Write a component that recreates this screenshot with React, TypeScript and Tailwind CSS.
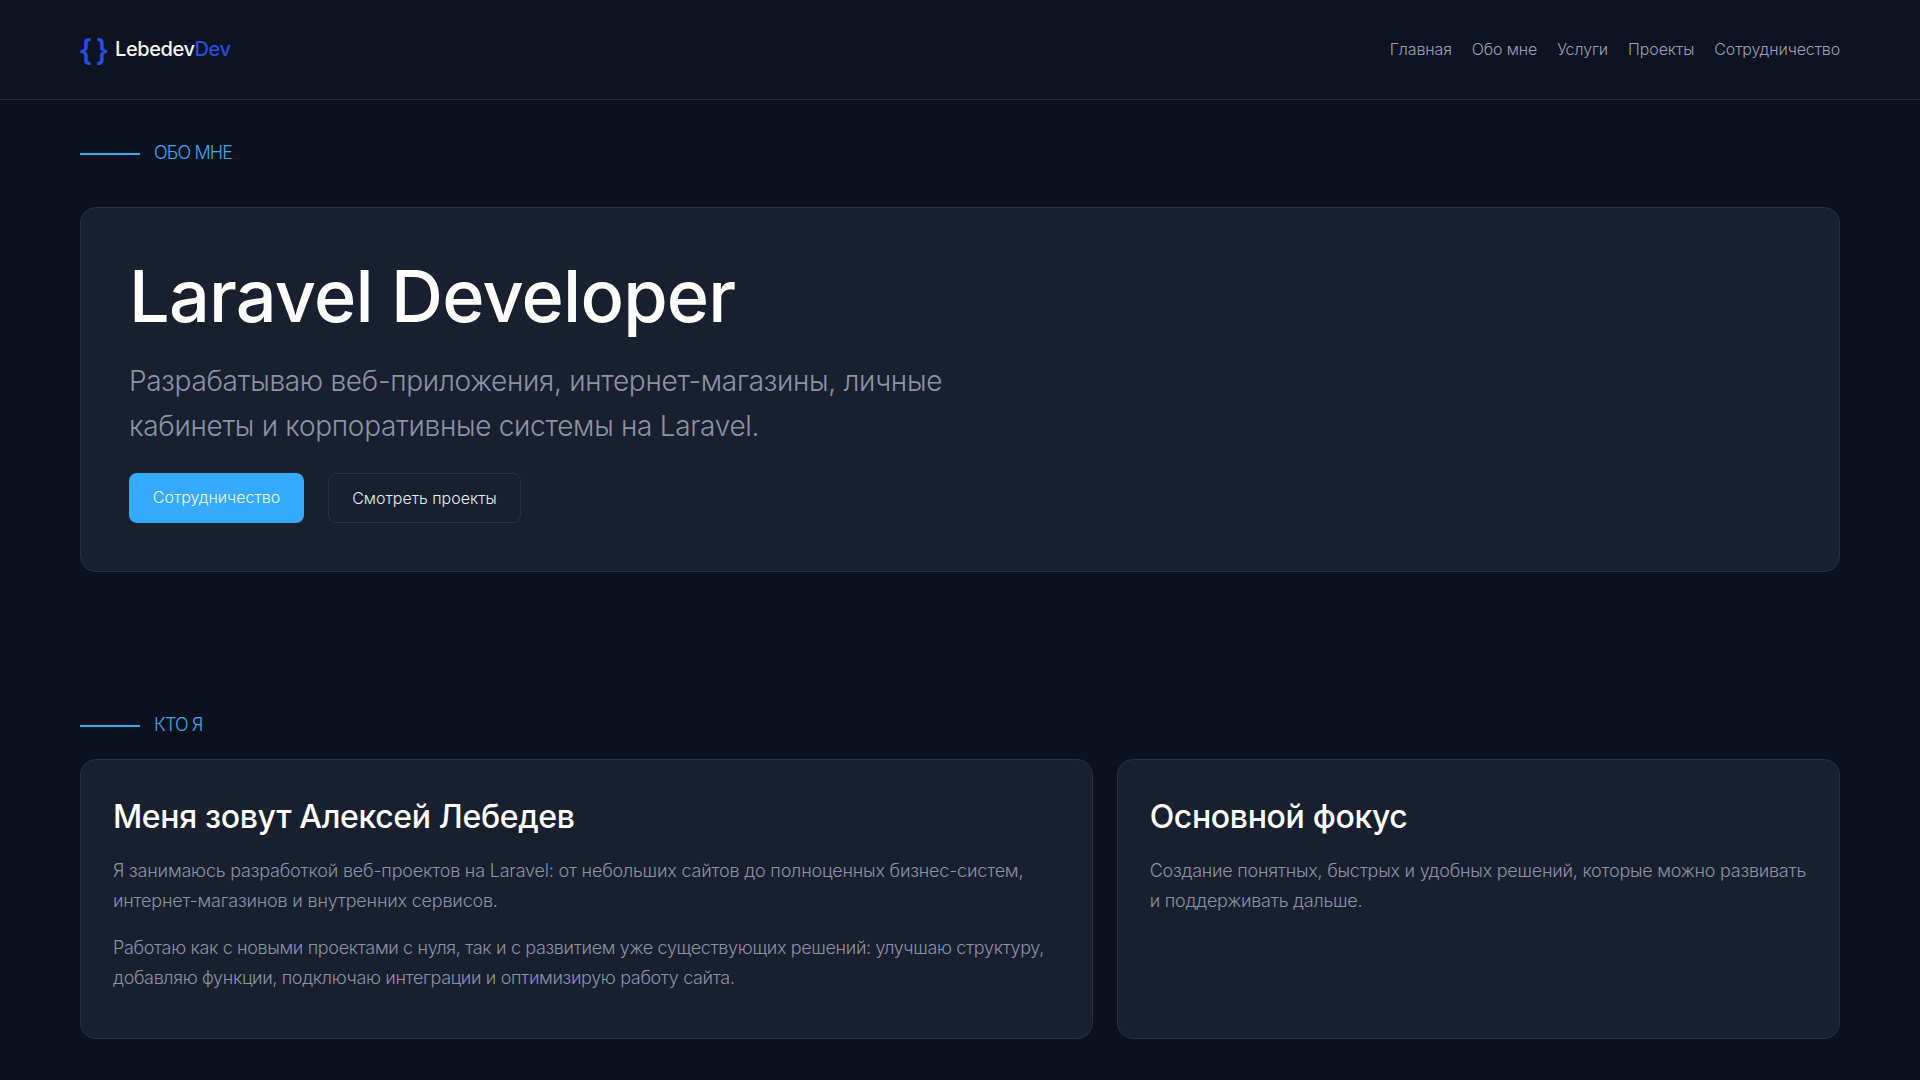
const font = { fontFamily: '"Inter", "Noto Sans", sans-serif' }

function Eyebrow({ label }: { label: string }) {
  return (
    <div className="flex items-center gap-[14px]">
      <span className="mt-[2px] h-[2px] w-[60px] bg-[#42a8ec]" />
      <span className="text-[18px] leading-[24px] font-light tracking-[-0.85px] text-[#3fa9f0]">{label}</span>
    </div>
  )
}

export default function App() {
  const nav = ['Главная', 'Обо мне', 'Услуги', 'Проекты', 'Сотрудничество']

  return (
    <div style={font} className="min-h-screen bg-[#0b121e] text-white">
      {/* шапка */}
      <header className="flex h-[100px] items-center justify-between border-b border-[#252b38] bg-[#0d1320] px-[80px] pb-[2px]">
        <div className="flex items-center">
          <span className="flex w-[28px] justify-between font-['Noto_Sans'] text-[30px] leading-none font-semibold text-[#2350e0]">
            <span>{'{'}</span>
            <span>{'}'}</span>
          </span>
          <span className="ml-[7px] text-[20px] font-medium tracking-[-0.42px] text-[#f4f6fa]">
            Lebedev<span className="text-[#2350e0]">Dev</span>
          </span>
        </div>
        <nav className="flex items-center gap-[20px] text-[16px] font-light tracking-[-0.12px] text-[#9aa3b5]">
          {nav.map((item) => (
            <a key={item}>{item}</a>
          ))}
        </nav>
      </header>

      <main className="px-[80px] pb-[41px]">
        {/* обо мне */}
        <section className="pt-[41px]">
          <Eyebrow label="ОБО МНЕ" />
          <div className="mt-[42px] h-[365px] rounded-[16px] border border-[#2a3040] bg-[#181f2e] px-[48px] pt-[45px]">
            <h1 className="text-[72px] leading-[86px] font-medium tracking-[-0.8px]">Laravel Developer</h1>
            <p className="mt-[20px] max-w-[860px] text-[28px] leading-[45px] font-light tracking-[-0.3px] text-[#8b93a7]">
              Разрабатываю веб-приложения, интернет-магазины, личные кабинеты и корпоративные системы на Laravel.
            </p>
            <div className="mt-[24px] flex gap-[24px]">
              <a className="flex h-[50px] w-[175px] items-center justify-center rounded-[8px] bg-[#35aafc] pb-[2px] text-[16px] font-light text-[#f2faff]">
                Сотрудничество
              </a>
              <a className="flex h-[50px] w-[193px] items-center justify-center rounded-[8px] border border-[#2a3040] text-[16px] font-light text-[#e8ebf1]">
                Смотреть проекты
              </a>
            </div>
          </div>
        </section>

        {/* кто я */}
        <section className="pt-[141px]">
          <Eyebrow label="КТО Я" />
          <div className="mt-[22px] grid grid-cols-[1.4fr_1fr] gap-[24px]">
            <div className="h-[280px] rounded-[16px] border border-[#2a3040] bg-[#181f2e] px-[32px] pt-[37px]">
              <h2 className="text-[32px] leading-[40px] font-medium tracking-[-0.35px]">Меня зовут Алексей Лебедев</h2>
              <p className="mt-[19px] text-[18px] leading-[30px] font-light tracking-[-0.2px] text-[#8b93a7]">
                Я занимаюсь разработкой веб-проектов на Laravel: от небольших сайтов до полноценных бизнес-систем, интернет-магазинов и внутренних сервисов.
              </p>
              <p className="mt-[17px] text-[18px] leading-[30px] font-light tracking-[-0.36px] text-[#8b93a7]">
                Работаю как с новыми проектами с нуля, так и с развитием уже существующих решений: улучшаю структуру, добавляю функции, подключаю интеграции и оптимизирую работу сайта.
              </p>
            </div>
            <div className="h-[280px] rounded-[16px] border border-[#2a3040] bg-[#181f2e] px-[32px] pt-[37px]">
              <h2 className="text-[32px] leading-[40px] font-medium tracking-[-0.35px]">Основной фокус</h2>
              <p className="mt-[19px] text-[18px] leading-[30px] font-light tracking-[-0.25px] text-[#8b93a7]">
                Создание понятных, быстрых и удобных решений, которые можно развивать и поддерживать дальше.
              </p>
            </div>
          </div>
        </section>
      </main>
    </div>
  )
}
